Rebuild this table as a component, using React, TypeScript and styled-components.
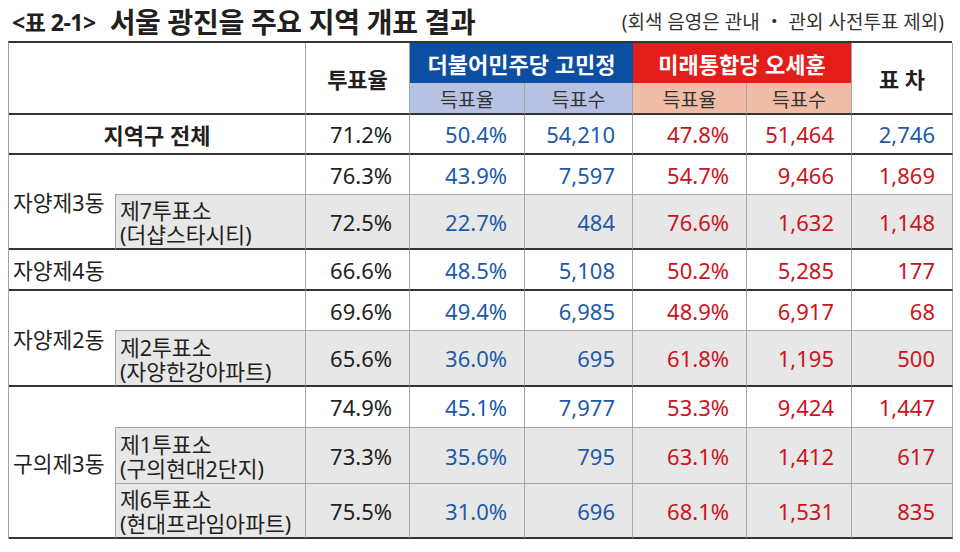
import React from "react";
import styled, { createGlobalStyle } from "styled-components";

const GlobalStyle = createGlobalStyle`
  body {
    margin: 0;
    background: #ffffff;
    font-family: "Noto Sans", "Noto Sans CJK KR", sans-serif;
    color: #231f20;
  }
`;

const Page = styled.div`
  width: 960px;
  padding: 0 8px;
  box-sizing: border-box;
`;

const Heading = styled.div`
  height: 41px;
  display: flex;
  align-items: center;
  justify-content: space-between;
  padding: 0 8px 0 4px;
`;

const Title = styled.h1`
  margin: 0;
  font-size: 28px;
  font-weight: 700;
  letter-spacing: -0.3px;
  display: flex;
  align-items: center;
`;

const TableNo = styled.span`
  font-size: 23px;
  margin-right: 14px;
  letter-spacing: -0.5px;
`;

const Note = styled.span`
  font-size: 19px;
  color: #333;
`;

const Grid = styled.div`
  display: grid;
  grid-template-columns: 106px 191px 104px 115px 108px 114px 105px 101px;
  grid-template-rows: 40px 32px 40px 40px 55px 41px 40px 56px 41px 56px 55px;
  border-top: 2px solid #333;
  border-left: 1px solid #a0a0a0;
`;

type CellProps = {
  $cols?: number;
  $rows?: number;
  $bg?: string;
  $align?: "left" | "center" | "right";
  $color?: string;
  $bold?: boolean;
  $thick?: boolean;
  $noRight?: boolean;
  $noBottom?: boolean;
  $left?: boolean;
  $size?: number;
};

const justify = { left: "flex-start", center: "center", right: "flex-end" };

const Cell = styled.div<CellProps>`
  box-sizing: border-box;
  grid-column: span ${(p) => p.$cols ?? 1};
  grid-row: span ${(p) => p.$rows ?? 1};
  display: flex;
  align-items: center;
  justify-content: ${(p) => justify[p.$align ?? "right"]};
  padding: ${(p) => (p.$align === "left" ? "0 4px" : p.$align === "center" ? "0" : "0 17px 0 0")};
  background: ${(p) => p.$bg ?? "#ffffff"};
  color: ${(p) => p.$color ?? "#231f20"};
  font-size: ${(p) => p.$size ?? 22}px;
  font-weight: ${(p) => (p.$bold ? 700 : 400)};
  border-right: ${(p) => (p.$noRight ? "none" : "1px solid #a6a6a6")};
  border-left: ${(p) => (p.$left ? "1px solid #a6a6a6" : "none")};
  border-bottom: ${(p) =>
    p.$noBottom ? "none" : p.$thick ? "2px solid #333" : "1px solid #a6a6a6"};
  white-space: nowrap;
`;

const TwoLine = styled.div`
  display: flex;
  flex-direction: column;
  padding-top: 3px;
`;

const Line = styled.span`
  line-height: 24px;
`;

const BLUE = "#1d5ba8";
const RED = "#cc1421";
const SHADE = "#e7e7e7";

type Nums = [string, string, string, string, string, string];

type Sub = { name: string; place: string; nums: Nums };
type Group = { name: string; nums: Nums; subs: Sub[] };

const groups: Group[] = [
  {
    name: "자양제3동",
    nums: ["76.3%", "43.9%", "7,597", "54.7%", "9,466", "1,869"],
    subs: [
      { name: "제7투표소", place: "(더샵스타시티)", nums: ["72.5%", "22.7%", "484", "76.6%", "1,632", "1,148"] },
    ],
  },
  {
    name: "자양제4동",
    nums: ["66.6%", "48.5%", "5,108", "50.2%", "5,285", "177"],
    subs: [],
  },
  {
    name: "자양제2동",
    nums: ["69.6%", "49.4%", "6,985", "48.9%", "6,917", "68"],
    subs: [
      { name: "제2투표소", place: "(자양한강아파트)", nums: ["65.6%", "36.0%", "695", "61.8%", "1,195", "500"] },
    ],
  },
  {
    name: "구의제3동",
    nums: ["74.9%", "45.1%", "7,977", "53.3%", "9,424", "1,447"],
    subs: [
      { name: "제1투표소", place: "(구의현대2단지)", nums: ["73.3%", "35.6%", "795", "63.1%", "1,412", "617"] },
      { name: "제6투표소", place: "(현대프라임아파트)", nums: ["75.5%", "31.0%", "696", "68.1%", "1,531", "835"] },
    ],
  },
];

function NumCells({ nums, bg, thick, gapBlue }: { nums: Nums; bg?: string; thick?: boolean; gapBlue?: boolean }) {
  const colors = ["#231f20", BLUE, BLUE, RED, RED, gapBlue ? BLUE : RED];
  return (
    <>
      {nums.map((n, i) => (
        <Cell key={i} $bg={bg} $thick={thick} $color={colors[i]}>
          {n}
        </Cell>
      ))}
    </>
  );
}

function GroupRows({ group }: { group: Group }) {
  if (group.subs.length === 0) {
    return (
      <>
        <Cell $cols={2} $align="left" $thick $size={21.5}>
          {group.name}
        </Cell>
        <NumCells nums={group.nums} thick />
      </>
    );
  }
  const last = group.subs.length - 1;
  return (
    <>
      <Cell $rows={group.subs.length + 1} $align="left" $noRight $thick $size={21.5}>
        {group.name}
      </Cell>
      <Cell />
      <NumCells nums={group.nums} />
      {group.subs.map((s, i) => (
        <React.Fragment key={s.name}>
          <Cell $align="left" $bg={SHADE} $left $thick={i === last} $size={21.5}>
            <TwoLine>
              <Line>{s.name}</Line>
              <Line>{s.place}</Line>
            </TwoLine>
          </Cell>
          <NumCells nums={s.nums} bg={SHADE} thick={i === last} />
        </React.Fragment>
      ))}
    </>
  );
}

export default function App() {
  return (
    <Page>
      <GlobalStyle />
      <Heading>
        <Title>
          <TableNo>&lt;표 2-1&gt;</TableNo>
          서울 광진을 주요 지역 개표 결과
        </Title>
        <Note>(회색 음영은 관내 ・ 관외 사전투표 제외)</Note>
      </Heading>
      <Grid>
        <Cell $cols={2} $rows={2} $thick />
        <Cell $rows={2} $align="center" $bold $thick>
          투표율
        </Cell>
        <Cell $cols={2} $align="center" $bg="#0b4ea2" $color="#ffffff" $bold $noRight $noBottom>
          더불어민주당 고민정
        </Cell>
        <Cell $cols={2} $align="center" $bg="#e31d1a" $color="#ffffff" $bold $noBottom>
          미래통합당 오세훈
        </Cell>
        <Cell $rows={2} $align="center" $bold $thick>
          표 차
        </Cell>
        <Cell $align="center" $bg="#b7c1e3" $thick $size={19.5} $color="#333">
          득표율
        </Cell>
        <Cell $align="center" $bg="#b7c1e3" $thick $size={19.5} $color="#333">
          득표수
        </Cell>
        <Cell $align="center" $bg="#f1bca6" $thick $size={19.5} $color="#333">
          득표율
        </Cell>
        <Cell $align="center" $bg="#f1bca6" $thick $size={19.5} $color="#333">
          득표수
        </Cell>

        <Cell $cols={2} $align="center" $bold $thick>
          지역구 전체
        </Cell>
        <NumCells nums={["71.2%", "50.4%", "54,210", "47.8%", "51,464", "2,746"]} thick gapBlue />

        {groups.map((g) => (
          <GroupRows key={g.name} group={g} />
        ))}
      </Grid>
    </Page>
  );
}
